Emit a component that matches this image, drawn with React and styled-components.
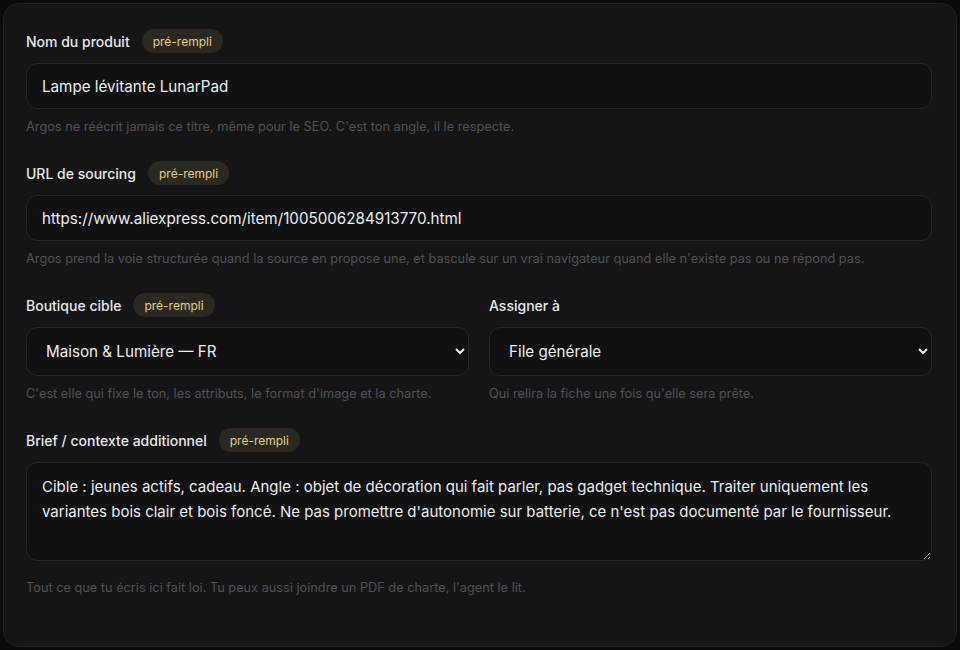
import React from 'react'
import styled, { createGlobalStyle } from 'styled-components'

const GlobalStyle = createGlobalStyle`
  html, body {
    margin: 0;
    padding: 0;
    background: #0b0b0d;
    color-scheme: dark;
  }
  body {
    font-family: Inter, "Noto Sans", sans-serif;
  }
`

const Page = styled.div`
  padding: 3px;
  box-sizing: border-box;
  height: 650px;
`

const Card = styled.div`
  box-sizing: border-box;
  height: 644px;
  background: #151517;
  border: 1px solid #212124;
  border-radius: 16px;
  padding: 25px 24px 0 22px;
  display: flex;
  flex-direction: column;
  gap: 25px;
`

const Field = styled.div`
  display: flex;
  flex-direction: column;
  min-width: 0;
`

const Row = styled.div`
  display: grid;
  grid-template-columns: 1fr 1fr;
  gap: 20px;
`

const LabelRow = styled.div`
  display: flex;
  align-items: center;
  gap: 12px;
  height: 24px;
  margin-bottom: 10px;
`

const Label = styled.label`
  font-size: 14px;
  font-weight: 450;
  color: #e8e8ea;
`

const Badge = styled.span`
  display: inline-flex;
  align-items: center;
  height: 24px;
  padding: 0 11px;
  border-radius: 12px;
  background: #2b281f;
  color: #e4cd8a;
  font-size: 12px;
  font-weight: 400;
`

const Input = styled.input`
  box-sizing: border-box;
  height: 46px;
  width: 100%;
  background: #111113;
  border: 1px solid #252528;
  border-radius: 11px;
  padding: 0 15px;
  color: #ececee;
  font-family: inherit;
  font-size: 15.2px;
  outline: none;
`

const Select = styled.select`
  box-sizing: border-box;
  height: 49px;
  width: 100%;
  background: #111113;
  border: 1px solid #252528;
  border-radius: 11px;
  padding: 0 10px 0 15px;
  color: #ececee;
  font-family: inherit;
  font-size: 15.2px;
  outline: none;
`

const TextArea = styled.textarea`
  display: block;
  box-sizing: border-box;
  height: 99px;
  width: 100%;
  background: #111113;
  border: 1px solid #252528;
  border-radius: 11px;
  padding: 11px 15px;
  color: #ececee;
  font-family: inherit;
  font-size: 15px;
  line-height: 25px;
  outline: none;
  resize: vertical;
`

const Help = styled.p`
  margin: ${p => (p.$wide ? '18px' : '9px')} 0 0;
  font-size: 12.75px;
  line-height: 18px;
  color: #505055;
`

const FieldLabel = ({ children, prefilled }) => (
  <LabelRow>
    <Label>{children}</Label>
    {prefilled && <Badge>pré-rempli</Badge>}
  </LabelRow>
)

export default function App() {
  return (
    <Page>
      <GlobalStyle />
      <Card>
        <Field>
          <FieldLabel prefilled>Nom du produit</FieldLabel>
          <Input defaultValue="Lampe lévitante LunarPad" />
          <Help>Argos ne réécrit jamais ce titre, même pour le SEO. C'est ton angle, il le respecte.</Help>
        </Field>

        <Field>
          <FieldLabel prefilled>URL de sourcing</FieldLabel>
          <Input defaultValue="https://www.aliexpress.com/item/1005006284913770.html" />
          <Help>Argos prend la voie structurée quand la source en propose une, et bascule sur un vrai navigateur quand elle n'existe pas ou ne répond pas.</Help>
        </Field>

        <Row>
          <Field>
            <FieldLabel prefilled>Boutique cible</FieldLabel>
            <Select defaultValue="ml">
              <option value="ml">Maison &amp; Lumière — FR</option>
            </Select>
            <Help>C'est elle qui fixe le ton, les attributs, le format d'image et la charte.</Help>
          </Field>
          <Field>
            <FieldLabel>Assigner à</FieldLabel>
            <Select defaultValue="all">
              <option value="all">File générale</option>
            </Select>
            <Help>Qui relira la fiche une fois qu'elle sera prête.</Help>
          </Field>
        </Row>

        <Field>
          <FieldLabel prefilled>Brief / contexte additionnel</FieldLabel>
          <TextArea defaultValue="Cible : jeunes actifs, cadeau. Angle : objet de décoration qui fait parler, pas gadget technique. Traiter uniquement les variantes bois clair et bois foncé. Ne pas promettre d'autonomie sur batterie, ce n'est pas documenté par le fournisseur." />
          <Help $wide>Tout ce que tu écris ici fait loi. Tu peux aussi joindre un PDF de charte, l'agent le lit.</Help>
        </Field>
      </Card>
    </Page>
  )
}
